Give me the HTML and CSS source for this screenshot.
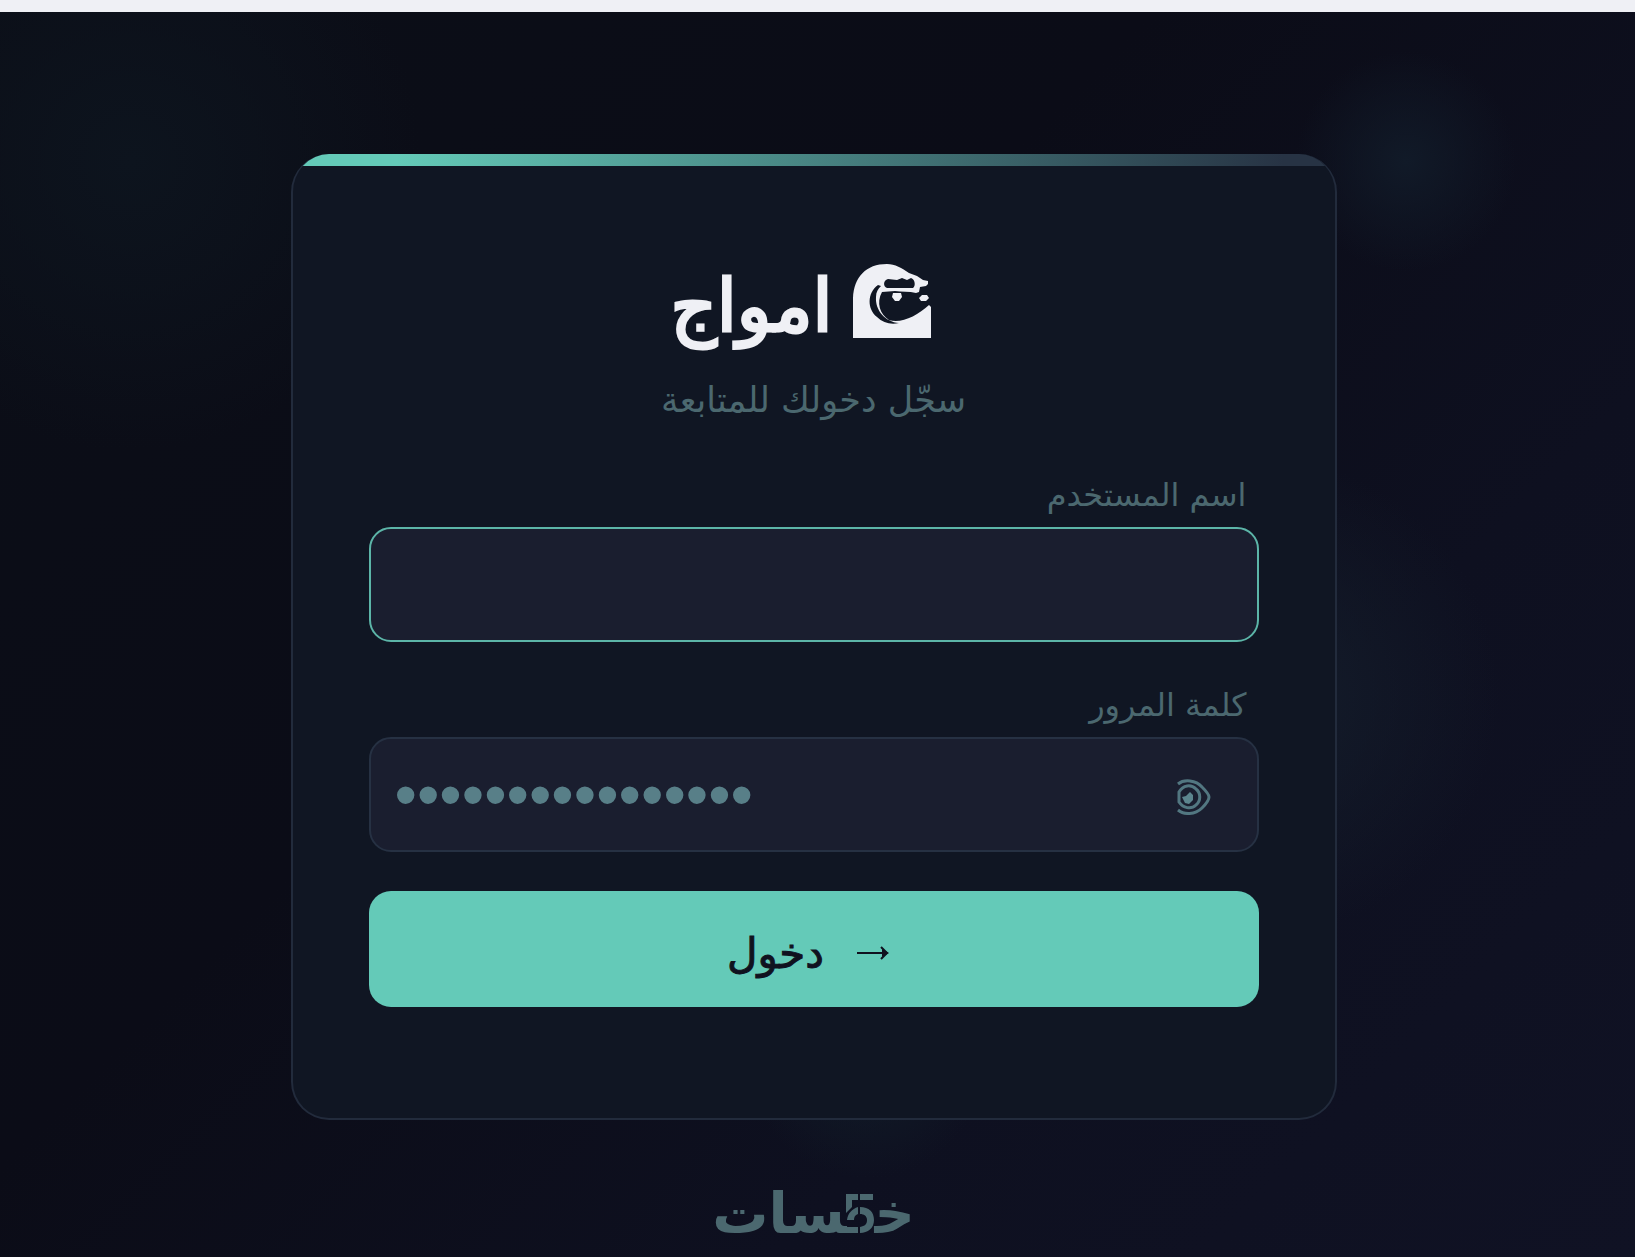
FILE: index.html
```
<!DOCTYPE html>
<html lang="ar" dir="rtl">
<head>
  <meta charset="UTF-8">
  <meta name="viewport" content="width=device-width, initial-scale=1.0">
  <title>امواج</title>
  <link rel="stylesheet" href="styles.css">
</head>
<body>
  <main class="page">
    <div class="card">
      <div class="card-bar"></div>
      <h1 class="brand">
        <svg class="brand-icon" viewBox="0 0 78 74" aria-hidden="true">
          <path fill="#eff0f5" fill-rule="evenodd" d="M0 74V34C1 13 13 0 34 0C42 0 49 4 56 9L64 12L70 16L75 17L75 20L73 22L67 23L66 28L63 29C56 27 49 28 42 27L29 28C23 39 27 50 36 56C48 60 64 52 76 41L78 43V74ZM35 15C30 16 30 23 34 24H60C63 22 62 15 58 14L54 16L49 14L44 16ZM25 21C14 29 14 45 24 53C30 59 38 61 46 59C32 58 22 46 23 33C23 28 25 25 28 22Z"/>
          <path fill="#eff0f5" d="M40 29l8 0 1 4-3 4-4 0-3-4zM66 34l3-3 5 0 2 3-3 3-5 0z"/>
        </svg>
        <span>امواج</span>
      </h1>
      <p class="subtitle">سجّل دخولك للمتابعة</p>

      <form class="login-form">
        <label for="username">اسم المستخدم</label>
        <input class="field active" type="text" id="username">

        <label for="password">كلمة المرور</label>
        <div class="password-box">
          <input class="field" type="password" id="password" dir="ltr" value="1234567890123456">
          <button class="show-button" type="button" aria-label="إظهار كلمة المرور">
            <svg viewBox="0 0 34 36" aria-hidden="true">
              <g fill="none" stroke="#527781" stroke-width="3">
                <path d="M1 5C7 0 19 1 25 8C29 12 32 15 32 18C32 21 29 25 25 29C18 36 7 36 1 31"/>
                <path d="M2 13C6 6 14 5 19 10C24 14 24 22 19 26C14 31 6 29 2 23Z"/>
              </g>
              <path fill="#5c858e" d="M5 18l4-1 4-4 3 3 0 5-4 4-4-1-2-4z"/>
            </svg>
          </button>
        </div>

        <button class="submit-button" type="submit">
          <svg class="arrow" viewBox="0 0 34 16" aria-hidden="true">
            <path fill="none" stroke="#10121f" stroke-width="2" d="M1 8H31M25 2L31 8L25 14"/>
            <path fill="#10121f" d="M26 4L33 8L26 12Z"/>
          </svg>
          <span>دخول</span>
        </button>
      </form>
    </div>

    <a class="footer-logo" href="#" aria-label="خمسات">
      <span>خ&zwj;</span>
      <svg viewBox="0 0 28 40" aria-hidden="true">
        <path fill="#4b686f" d="M0 0H12V6H6V13L0 19ZM14 0H27V6H14ZM1 26C2 19 6 15 12 13V20C9 21 8 23 8 26ZM14 13C23 13 28 18 28 26C28 34 22 39 14 39V33C19 32 21 30 21 26C21 22 18 20 14 20ZM0 33H12V39H0Z"/>
      </svg>
      <span>&zwj;سات</span>
    </a>
  </main>
</body>
</html>
```
FILE: styles.css
```
* {
  box-sizing: border-box;
}
body {
  margin: 0;
  min-height: 100vh;
  display: flex;
  font-family: "DejaVu Sans", sans-serif;
  color: #eff0f5;
  background-color: #0b0d18;
}
.page {
  flex: 1;
  display: flex;
  flex-direction: column;
  align-items: center;
  padding: 142px 32px 16px 24px;
  border-top: 12px solid #eff0f5;
  background:
    radial-gradient(circle at 86% 12%, #111a28 0, transparent 110px),
    radial-gradient(circle at 77% 55%, #141d2b 0, transparent 240px),
    radial-gradient(circle at 8% 12%, #0d141e 0, transparent 290px),
    radial-gradient(circle at 53% 84%, #111c28 0, transparent 120px),
    linear-gradient(135deg, #0b0e17 0%, #0b0c17 40%, #0e1020 70%, #101224 100%);
}
.card {
  width: 100%;
  max-width: 1046px;
  padding: 0 76px 111px;
  border: 2px solid #222b3c;
  border-top: none;
  border-radius: 38px;
  background-color: #101623;
  overflow: hidden;
}
.card-bar {
  height: 12px;
  margin: 0 -76px;
  background: linear-gradient(to right, #64cab8 10%, #273344 95%);
}
.brand {
  display: flex;
  justify-content: center;
  gap: 20px;
  margin: 98px 0 0;
  padding-right: 26px;
  font-size: 72px;
  font-weight: normal;
  line-height: 84px;
  -webkit-text-stroke: 3px #eff0f5;
}
.brand-icon {
  width: 78px;
  height: 74px;
}
.subtitle {
  margin: 28px 0 0;
  font-size: 35px;
  line-height: 48px;
  text-align: center;
  color: #4b686f;
}
.login-form {
  margin-top: 47px;
}
.login-form label {
  display: block;
  padding: 0 12px;
  font-size: 32px;
  line-height: 48px;
  color: #4b686f;
}
.field {
  display: block;
  width: 100%;
  height: 115px;
  margin: 8px 0 39px;
  padding: 0 24px;
  border: 2px solid #263143;
  border-radius: 22px;
  outline: none;
  font-family: "DejaVu Sans", sans-serif;
  font-size: 38px;
  color: #587f88;
  background-color: #1a1e2f;
}
.field[type="password"] {
  font-family: "Liberation Sans", sans-serif;
  font-size: 64px;
}
.field.active {
  border-color: #5cb5a8;
}
.password-box {
  position: relative;
}
.show-button {
  position: absolute;
  top: 40px;
  right: 48px;
  width: 34px;
  height: 40px;
  padding: 0;
  border: none;
  background: none;
  cursor: pointer;
}
.show-button svg {
  display: block;
  width: 34px;
  height: 36px;
}
.submit-button {
  display: flex;
  justify-content: center;
  align-items: center;
  gap: 32px;
  width: 100%;
  height: 116px;
  padding: 8px 10px 0 0;
  border: none;
  border-radius: 22px;
  font-family: "DejaVu Sans", sans-serif;
  font-size: 42px;
  -webkit-text-stroke: 1px #10121f;
  color: #10121f;
  background-color: #64cab8;
  cursor: pointer;
}
.arrow {
  width: 34px;
  height: 16px;
}
.footer-logo {
  display: flex;
  align-items: center;
  margin-top: 66px;
  font-size: 56px;
  font-weight: bold;
  line-height: 56px;
  color: #4b686f;
  text-decoration: none;
}
.footer-logo svg {
  width: 28px;
  height: 40px;
}
```
